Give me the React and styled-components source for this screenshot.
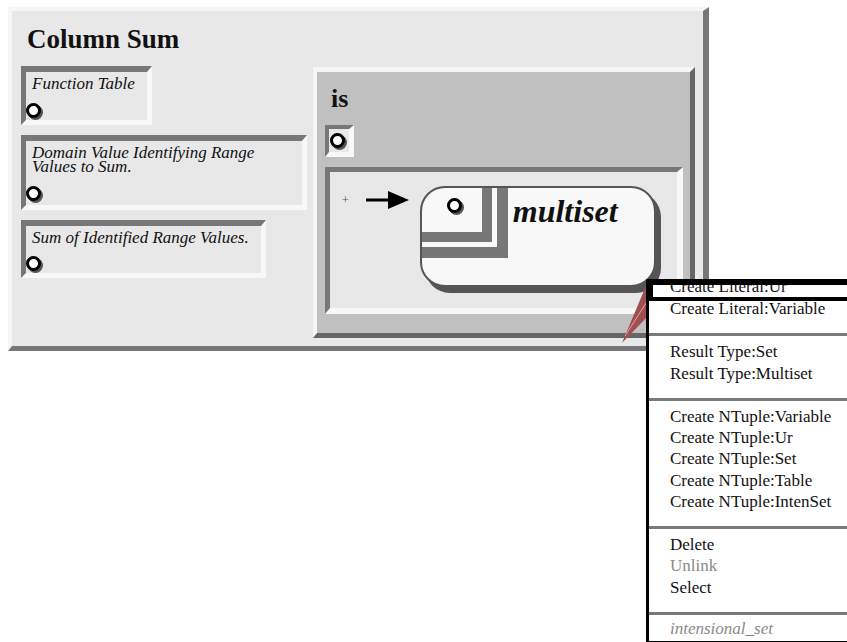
import React from "react";
import styled, { createGlobalStyle } from "styled-components";

const GlobalStyle = createGlobalStyle`
  html, body {
    margin: 0;
    padding: 0;
    background: #ffffff;
    overflow: hidden;
  }
  body {
    font-family: "Liberation Serif", "Times New Roman", serif;
    color: #111;
  }
`;

const Page = styled.div`
  position: relative;
  width: 847px;
  height: 642px;
  padding: 7px 0 0 8px;
  box-sizing: border-box;
`;

const Frame = styled.div`
  width: 701px;
  box-sizing: border-box;
  background: #e8e8e8;
  border-top: 4px solid #f6f6f6;
  border-left: 4px solid #f6f6f6;
  border-right: 6px solid #777;
  border-bottom: 5px solid #777;
  padding: 12px 8px 8px 9px;
`;

const Title = styled.h1`
  margin: 0 0 11px 6px;
  font-size: 27px;
  line-height: 32px;
  font-weight: bold;
`;

const Body = styled.div`
  display: grid;
  grid-template-columns: 286px 382px;
  column-gap: 6px;
  align-items: start;
`;

const Params = styled.div`
  display: flex;
  flex-direction: column;
  align-items: flex-start;
  gap: 10px;
`;

const Card = styled.div`
  max-width: 100%;
  box-sizing: border-box;
  border-top: 6px solid #777;
  border-left: 5px solid #777;
  border-right: 5px solid #f8f8f8;
  border-bottom: 5px solid #f8f8f8;
  padding: 5px 12px ${(p) => (p.$tall ? 4 : 2)}px 0;
`;

const CardText = styled.div`
  padding-left: 6px;
  font-style: italic;
  font-size: 17px;
  line-height: 14.5px;
`;

const Port = styled.span`
  display: block;
  width: ${(p) => p.$size || 15}px;
  height: ${(p) => p.$size || 15}px;
  box-sizing: border-box;
  border-radius: 50%;
  border: 3px solid #000;
  background: #fff;
  box-shadow: 2px 2px 0 #555;
  margin-top: ${(p) => p.$gap || 0}px;
`;

const IsPanel = styled.div`
  margin-top: 1px;
  box-sizing: border-box;
  background: #c0c0c0;
  border-top: 5px solid #f6f6f6;
  border-left: 4px solid #f6f6f6;
  border-right: 5px solid #666;
  border-bottom: 5px solid #666;
  padding: 12px 7px 19px 8px;
`;

const IsLabel = styled.div`
  margin: 0 0 11px 6px;
  font-size: 26px;
  line-height: 30px;
  font-weight: bold;
`;

const PortWell = styled.div`
  width: fit-content;
  background: #e8e8e8;
  border-top: 4px solid #777;
  border-left: 4px solid #777;
  border-right: 5px solid #f8f8f8;
  border-bottom: 5px solid #f8f8f8;
  padding: 4px 4px 4px 1px;
  margin-bottom: 10px;
`;

const DropArea = styled.div`
  display: flex;
  align-items: flex-start;
  min-height: 122px;
  background: #e8e8e8;
  border-top: 5px solid #777;
  border-left: 5px solid #777;
  border-right: 6px solid #f8f8f8;
  border-bottom: 6px solid #f8f8f8;
  padding: 14px 0 0 12px;
  box-sizing: content-box;
`;

const Plus = styled.span`
  margin-top: 7px;
  font-size: 12px;
  line-height: 14px;
  color: #555;
`;

const Arrow = styled.svg`
  display: block;
  margin: 3px 0 0 17px;
  flex: none;
`;

const Node = styled.div`
  display: flex;
  align-items: flex-start;
  flex: none;
  margin-left: 11px;
  width: 236px;
  height: 101px;
  box-sizing: border-box;
  background: #f8f8f8;
  border: 2px solid #555;
  border-radius: 25px;
  box-shadow: 5px 6px 0 #555;
  overflow: hidden;
`;

const OuterFrame = styled.div`
  border-right: 11px solid #777;
  border-bottom: 11px solid #777;
  padding: 0 5px 5px 0;
`;

const InnerFrame = styled.div`
  border-right: 10px solid #777;
  border-bottom: 10px solid #777;
`;

const Slot = styled.div`
  width: 60px;
  height: 44px;
  box-sizing: border-box;
  padding: 10px 0 0 25px;
`;

const NodeLabel = styled.div`
  margin: 6px 0 0 5px;
  font-size: 32px;
  line-height: 34px;
  font-weight: bold;
  font-style: italic;
`;

const Pointer = styled.svg`
  position: absolute;
  left: 618px;
  top: 278px;
  z-index: 2;
`;

const Menu = styled.div`
  position: absolute;
  left: 646px;
  top: 279px;
  width: 230px;
  z-index: 3;
  background: #fff;
  border-left: 3px solid #000;
  border-bottom: 3px solid #000;
  font-size: 17px;
  color: #111;
`;

const FocusRow = styled.div`
  height: 12px;
  overflow: hidden;
  border-top: 6px solid #000;
  border-bottom: 4px solid #000;
  border-left: 4px solid #000;
  padding-left: 17px;
  line-height: 21px;
  white-space: nowrap;

  span {
    display: block;
    margin-top: -9px;
  }
`;

const Section = styled.div`
  padding: ${(p) => p.$pad || "5px 0 14px"};
  & + & {
    border-top: 3px solid #7a7a7a;
  }
`;

const Item = styled.div`
  padding-left: 21px;
  line-height: 21.25px;
  white-space: nowrap;
  color: ${(p) => (p.$disabled ? "#8a8a8a" : "#111")};
  margin-top: ${(p) => p.$pull || 0}px;
`;

const Footer = styled(Item)`
  font-style: italic;
  color: #8a8a8a;
`;

const params = [
  { label: "Function Table" },
  { label: "Domain Value Identifying Range Values to Sum.", tall: true },
  { label: "Sum of Identified Range Values." },
];

const menu = [
  ["Result Type:Set", "Result Type:Multiset"],
  [
    "Create NTuple:Variable",
    "Create NTuple:Ur",
    "Create NTuple:Set",
    "Create NTuple:Table",
    "Create NTuple:IntenSet",
  ],
];

export default function App() {
  return (
    <>
      <GlobalStyle />
      <Page>
        <Frame>
          <Title>Column Sum</Title>
          <Body>
            <Params>
              {params.map((p) => (
                <Card key={p.label} $tall={p.tall}>
                  <CardText>{p.label}</CardText>
                  <Port $gap={11} />
                </Card>
              ))}
            </Params>

            <IsPanel>
              <IsLabel>is</IsLabel>
              <PortWell>
                <Port />
              </PortWell>
              <DropArea>
                <Plus>+</Plus>
                <Arrow width="43" height="22" viewBox="0 0 43 22">
                  <line x1="0" y1="11" x2="24" y2="11" stroke="#000" strokeWidth="3" />
                  <polygon points="22,2 43,11 22,20" fill="#000" />
                </Arrow>
                <Node>
                  <OuterFrame>
                    <InnerFrame>
                      <Slot>
                        <Port $size={15} />
                      </Slot>
                    </InnerFrame>
                  </OuterFrame>
                  <NodeLabel>multiset</NodeLabel>
                </Node>
              </DropArea>
            </IsPanel>
          </Body>
        </Frame>

        <Pointer width="32" height="68" viewBox="0 0 32 68">
          <polygon points="4,65 30,3 30,38" fill="#a24e4e" />
          <line x1="7" y1="58" x2="30" y2="22" stroke="#d9a7a7" strokeWidth="1" />
        </Pointer>

        <Menu>
          <Section $pad="0 0 14px">
            <FocusRow>
              <span>Create Literal:Ur</span>
            </FocusRow>
            <Item $pull={-3}>Create Literal:Variable</Item>
          </Section>
          {menu.map((group, i) => (
            <Section key={i}>
              {group.map((label) => (
                <Item key={label}>{label}</Item>
              ))}
            </Section>
          ))}
          <Section $pad="5px 0 14px">
            <Item>Delete</Item>
            <Item $disabled>Unlink</Item>
            <Item>Select</Item>
          </Section>
          <Section $pad="3px 0 2px">
            <Footer>intensional_set</Footer>
          </Section>
        </Menu>
      </Page>
    </>
  );
}
